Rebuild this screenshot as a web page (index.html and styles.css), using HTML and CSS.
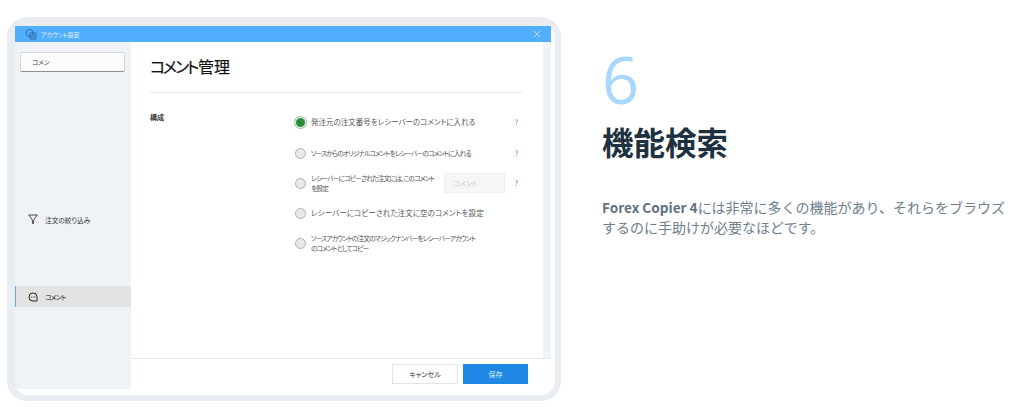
FILE: index.html
```html
<!DOCTYPE html>
<html lang="ja">
<head>
  <meta charset="UTF-8">
  <title>機能検索</title>
  <link rel="stylesheet" href="styles.css">
</head>
<body>
  <div class="page">
    <div class="frame">
      <div class="titlebar">
        <svg class="app-icon" width="12" height="12" viewBox="0 0 12 12" fill="none" stroke="#2d6ea8" stroke-width="1">
          <circle cx="4.5" cy="5" r="3.5"/>
          <path d="M5 5h6v6H5zM7 7v3M9 6.5V10"/>
        </svg>
        <span class="title-text">アカウント設定</span>
        <svg class="close" width="6" height="6" viewBox="0 0 6 6" stroke="#cfe6fb" stroke-width="0.8"><path d="M0 0l6 6M6 0L0 6"/></svg>
      </div>
      <div class="window">
        <div class="sidebar">
          <div class="search">コメン</div>
          <div class="nav-item nav-filter">
            <svg width="10" height="11" viewBox="0 0 10 11" fill="none" stroke="#333" stroke-width="0.9"><path d="M0.7 1h8.6L6 5.5 5 10 4 5.5z"/></svg>
            <span>注文の絞り込み</span>
          </div>
          <div class="nav-item nav-active">
            <svg width="10" height="10" viewBox="0 0 10 10" fill="none" stroke="#222" stroke-width="1"><path d="M5 1a4 4 0 0 1 4 4v4H5A4 4 0 0 1 5 1z"/><path d="M3 5h.8M4.7 5h.8M6.4 5h.8"/></svg>
            <span>コメント</span>
          </div>
        </div>
        <div class="content">
          <div class="panel">
            <h2 class="panel-title"><span class="title-kana">コメント</span>管理</h2>
            <div class="settings">
              <div class="settings-label">構成</div>
              <div class="options">
                <div class="option opt-1">
                  <span class="radio radio-on"></span>
                  <span class="option-text">発注元の注文番号をレシーバーのコメントに入れる</span>
                  <span class="help">?</span>
                </div>
                <div class="option opt-2">
                  <span class="radio"></span>
                  <span class="option-text">ソースからのオリジナルコメントをレシーバーのコメントに入れる</span>
                  <span class="help">?</span>
                </div>
                <div class="option opt-3">
                  <span class="radio"></span>
                  <span class="option-text">レシーバーにコピーされた注文には、このコメント<br>を設定</span>
                  <span class="comment-input">コメント</span>
                  <span class="help">?</span>
                </div>
                <div class="option opt-4">
                  <span class="radio"></span>
                  <span class="option-text">レシーバーにコピーされた注文に空のコメントを設定</span>
                </div>
                <div class="option opt-5">
                  <span class="radio"></span>
                  <span class="option-text">ソースアカウントの注文のマジックナンバーをレシーバーアカウント<br>のコメントとしてコピー</span>
                </div>
              </div>
            </div>
          </div>
          <div class="footer">
            <button class="btn btn-cancel">キャンセル</button>
            <button class="btn btn-save">保存</button>
          </div>
        </div>
      </div>
    </div>

    <div class="info">
      <div class="step">6</div>
      <h1 class="info-title">機能検索</h1>
      <p class="info-text"><b>Forex Copier 4</b>には非常に多くの機能があり、それらをブラウズするのに手助けが必要なほどです。</p>
    </div>
  </div>
</body>
</html>
```

FILE: styles.css
```css
* { box-sizing: border-box; }
html, body { margin: 0; height: 100%; background: #fff; overflow: hidden; }
body { font-family: "Noto Sans CJK JP", "Noto Sans", sans-serif; }

.page { display: flex; padding: 17px 0 0 7px; }

/* screenshot frame */
.frame {
  width: 554px;
  height: 384px;
  flex: none;
  border: solid #e9edf1;
  border-width: 9px 6px 6px 8px;
  border-radius: 20px;
  background: #fff;
  padding-right: 4px;
  padding-bottom: 6px;
  font-feature-settings: "palt";
}
.titlebar {
  height: 16px;
  background: #52aeff;
  display: flex;
  align-items: center;
  padding: 0 11px 0 10px;
}
.app-icon { margin-right: 4px; }
.title-text { font-size: 6px; color: #e4f2ff; }
.close { margin-left: auto; }

.window { display: flex; height: 347px; }
.sidebar {
  width: 116px;
  flex: none;
  background: #eff3f8;
  padding: 10px 0 0;
}
.search {
  width: 105px;
  height: 20px;
  margin-left: 5px;
  background: #fbfbfb;
  border: 1px solid #d5d5d5;
  border-bottom: 1px solid #8f8f8f;
  border-radius: 2px;
  font-size: 6.5px;
  line-height: 18px;
  padding-left: 11px;
  color: #444;
}
.nav-item {
  display: flex;
  align-items: center;
  gap: 7px;
  height: 21px;
  padding-left: 13px;
  font-size: 6.7px;
  color: #333;
}
.nav-filter { margin-top: 137px; }
.nav-active {
  margin-top: 56px;
  background: #e3e3e3;
  border-left: 1px solid #52aeff;
  padding-left: 12px;
  color: #222;
  letter-spacing: -0.6px;
}

.content { flex: 1; display: flex; flex-direction: column; min-width: 0; }
.panel {
  flex: 1;
  border-right: 8px solid #eef3f9;
  padding: 0 21px 0 19px;
}
.panel-title {
  margin: 0;
  height: 51px;
  border-bottom: 1px solid #e9e9e9;
  font-size: 16px;
  font-weight: 400;
  line-height: 49px;
  color: #111;
  -webkit-text-stroke: 0.2px #111;
}
.title-kana { letter-spacing: -2.2px; margin-right: 1px; }
.settings { display: flex; }
.settings-label {
  width: 145px;
  flex: none;
  padding-top: 19px;
  font-size: 7px;
  line-height: 10px;
  color: #222;
  -webkit-text-stroke: 0.2px #222;
}
.options { flex: 1; }
.option { display: flex; align-items: center; font-size: 7.5px; color: #555; }
.opt-1 { margin-top: 23px; height: 12px; }
.opt-2 { margin-top: 19px; height: 12px; font-size: 6.8px; letter-spacing: -0.9px; }
.opt-3 { margin-top: 14px; height: 20px; font-size: 6.8px; letter-spacing: -0.9px; }
.opt-3 .option-text { width: 133px; }
.opt-4 { margin-top: 14px; height: 12px; letter-spacing: 0.1px; }
.opt-5 { margin-top: 14px; height: 20px; font-size: 6.8px; letter-spacing: -0.92px; }

.radio {
  width: 11px;
  height: 11px;
  flex: none;
  border-radius: 50%;
  background: #e8e8e8;
  border: 1px solid #b0b0b0;
  margin-right: 5px;
}
.radio-on { background: #2e8b3a; border: 1px solid #fff; box-shadow: 0 0 0 1px #9fc7a4; }
.option-text { line-height: 10px; white-space: nowrap; }
.comment-input {
  width: 61px;
  height: 20px;
  flex: none;
  background: #f6f6f6;
  border: 1px solid #efefef;
  font-size: 7px;
  letter-spacing: 0;
  line-height: 18px;
  padding-left: 8px;
  color: #c9c9c9;
}
.help { margin-left: auto; margin-right: 4px; font-size: 7px; letter-spacing: 0; color: #3f8fd0; }

.footer {
  height: 31px;
  flex: none;
  border-top: 1px solid #e8e8e8;
  display: flex;
  justify-content: flex-end;
  gap: 5px;
  padding: 5px 23px 0 0;
}
.btn {
  height: 20px;
  border: 0;
  padding: 0;
  font-family: inherit;
  font-feature-settings: inherit;
  font-size: 7px;
}
.btn-cancel { width: 66px; background: #fff; border: 1px solid #e3e3e3; color: #333; }
.btn-save { width: 65px; background: #1f88e5; color: #dcefff; }

/* right-hand text */
.info { margin-left: 41px; width: 408px; }
.step {
  font-family: "Open Sans", "Noto Sans", sans-serif;
  font-size: 65px;
  line-height: 70px;
  margin-top: 27px;
  color: #a9d7ff;
}
.info-title {
  margin: 5px 0 0;
  font-size: 31.5px;
  font-weight: 700;
  line-height: 44px;
  color: #1d3140;
}
.info-text {
  margin: 34px 0 0;
  font-size: 14px;
  line-height: 20px;
  color: #6d7e8c;
}
.info-text b { font-size: 13.6px; font-weight: 700; color: #5f7180; }
```
